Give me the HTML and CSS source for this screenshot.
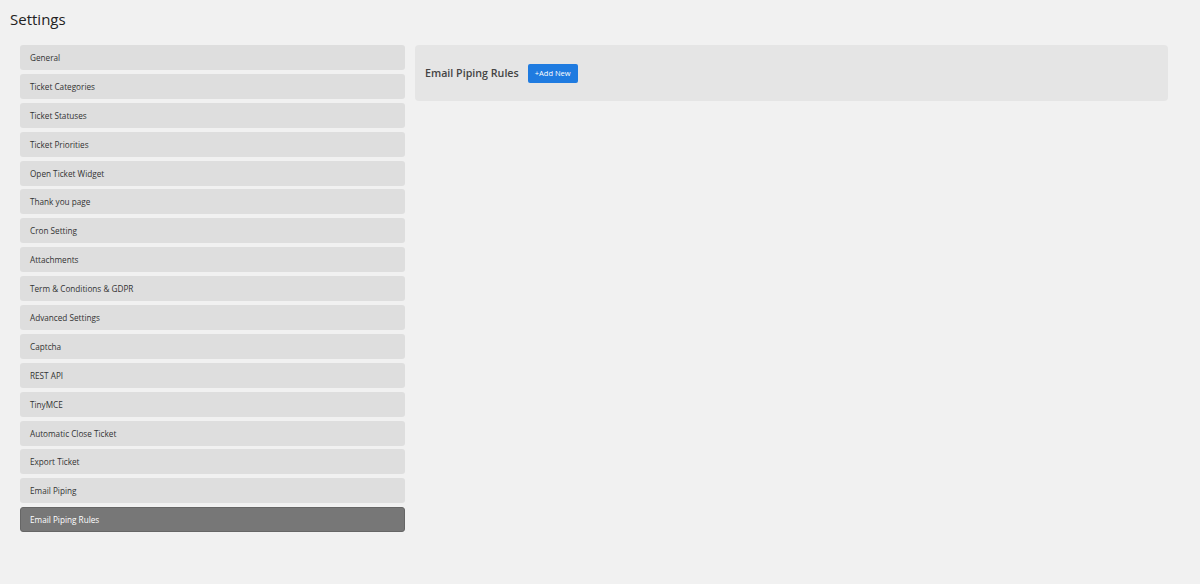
FILE: index.html
```html
<!DOCTYPE html>
<html lang="en">
<head>
    <meta charset="UTF-8">
    <meta name="viewport" content="width=device-width, initial-scale=1.0">
    <title>Settings</title>
    <link rel="stylesheet" href="styles.css">
</head>
<body>
    <div class="wrap">
        <h1>Settings</h1>
        <div class="settings-layout">
            <ul class="settings-nav">
                <li>General</li>
                <li>Ticket Categories</li>
                <li>Ticket Statuses</li>
                <li>Ticket Priorities</li>
                <li>Open Ticket Widget</li>
                <li>Thank you page</li>
                <li>Cron Setting</li>
                <li>Attachments</li>
                <li>Term &amp; Conditions &amp; GDPR</li>
                <li>Advanced Settings</li>
                <li>Captcha</li>
                <li>REST API</li>
                <li>TinyMCE</li>
                <li>Automatic Close Ticket</li>
                <li>Export Ticket</li>
                <li>Email Piping</li>
                <li class="active">Email Piping Rules</li>
            </ul>
            <div class="settings-panel">
                <div class="panel-head">
                    <h2>Email Piping Rules</h2>
                    <button class="btn-add">+Add New</button>
                </div>
            </div>
        </div>
    </div>
</body>
</html>
```

FILE: styles.css
```css
body {
    font-family: "Open Sans", "Noto Sans", Arial, sans-serif;
    margin: 0;
    background-color: #f1f1f1;
    color: #333;
}
.wrap {
    padding: 8px 10px 0 10px;
}
h1 {
    font-size: 15px;
    font-weight: 400;
    color: #222;
    margin: 0 0 15px 0;
    line-height: 22px;
}
.settings-layout {
    display: flex;
    align-items: flex-start;
    gap: 10px;
    padding-left: 10px;
}
.settings-nav {
    list-style: none;
    margin: 0;
    padding: 0;
    width: 385px;
    flex-shrink: 0;
}
.settings-nav li {
    background-color: #dedede;
    border-radius: 3px;
    height: 25px;
    line-height: 25px;
    padding-left: 10px;
    font-size: 8.2px;
    color: #333;
    margin-bottom: 3.9px;
    box-sizing: border-box;
}
.settings-nav li.active {
    background-color: #777;
    color: #fff;
    border: 1px solid #666;
    line-height: 23px;
    padding-left: 9px;
}
.settings-panel {
    width: 753px;
    background-color: #e5e5e5;
    border-radius: 4px;
    height: 56px;
    box-sizing: border-box;
    padding: 0 10px;
    display: flex;
    align-items: center;
}
.panel-head {
    display: flex;
    align-items: center;
    gap: 9px;
}
h2 {
    font-size: 10.7px;
    font-weight: 600;
    color: #444;
    margin: 0;
}
.btn-add {
    font-family: inherit;
    background-color: #1f7be0;
    color: #fff;
    border: none;
    border-radius: 2px;
    font-size: 7.5px;
    height: 19px;
    width: 50px;
    padding: 0;
    cursor: pointer;
}
```
